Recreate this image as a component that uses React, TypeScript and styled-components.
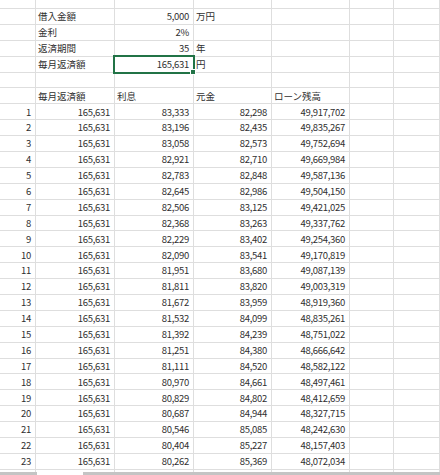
import React from "react";
import styled, { createGlobalStyle } from "styled-components";

const GlobalStyle = createGlobalStyle`
  html, body { margin: 0; padding: 0; background: #ffffff; }
  body { font-family: "Noto Sans CJK JP", "Noto Sans", sans-serif; }
`;

const Page = styled.div`
  width: 440px;
  height: 475px;
  overflow: hidden;
  display: flex;
  flex-direction: column;
  background: #ffffff;
`;

const Sheet = styled.div`
  flex: 1;
  min-height: 0;
  overflow: hidden;
  display: grid;
  grid-template-columns: 36px 79px 79px 78px 78px 44px 46px 1fr;
  grid-template-rows: 9px;
  grid-auto-rows: 15.9px;
  align-content: start;
`;

type Align = "left" | "right";

const Cell = styled.div<{ $align?: Align; $num?: boolean; $selected?: boolean }>`
  box-sizing: border-box;
  border-right: 1px solid #dedede;
  border-bottom: 1px solid #dedede;
  display: flex;
  align-items: center;
  justify-content: ${(p) => (p.$align === "right" ? "flex-end" : "flex-start")};
  padding: ${(p) => (p.$align === "right" ? "1px 4px 0 0" : "1px 0 0 2px")};
  font-size: 9.5px;
  line-height: 1;
  color: #303030;
  white-space: nowrap;
  letter-spacing: ${(p) => (p.$num ? "-0.3px" : "0")};
  position: ${(p) => (p.$selected ? "relative" : "static")};
  &::after {
    content: ${(p) => (p.$selected ? "''" : "none")};
    position: absolute;
    top: -2px;
    left: -2px;
    right: -2px;
    bottom: -2px;
    border: 2px solid #217346;
    pointer-events: none;
  }
`;

const Handle = styled.span`
  position: absolute;
  right: -3px;
  bottom: -3px;
  width: 4px;
  height: 4px;
  background: #217346;
  border: 1px solid #ffffff;
  z-index: 2;
`;

const Footer = styled.div`
  flex: 0 0 3px;
  display: flex;
`;

const FooterSegment = styled.div<{ $width?: number; $gap?: boolean }>`
  flex: ${(p) => (p.$width ? `0 0 ${p.$width}px` : "1")};
  background: ${(p) => (p.$gap ? "#ffffff" : "#c4c4c4")};
`;

type CellSpec = { text?: string; align?: Align; num?: boolean; selected?: boolean };

const L = (text: string): CellSpec => ({ text, align: "left" });
const R = (text: string): CellSpec => ({ text, align: "right", num: true });
const E: CellSpec = {};

const data: [number, string, string, string][] = [
  [1, "83,333", "82,298", "49,917,702"],
  [2, "83,196", "82,435", "49,835,267"],
  [3, "83,058", "82,573", "49,752,694"],
  [4, "82,921", "82,710", "49,669,984"],
  [5, "82,783", "82,848", "49,587,136"],
  [6, "82,645", "82,986", "49,504,150"],
  [7, "82,506", "83,125", "49,421,025"],
  [8, "82,368", "83,263", "49,337,762"],
  [9, "82,229", "83,402", "49,254,360"],
  [10, "82,090", "83,541", "49,170,819"],
  [11, "81,951", "83,680", "49,087,139"],
  [12, "81,811", "83,820", "49,003,319"],
  [13, "81,672", "83,959", "48,919,360"],
  [14, "81,532", "84,099", "48,835,261"],
  [15, "81,392", "84,239", "48,751,022"],
  [16, "81,251", "84,380", "48,666,642"],
  [17, "81,111", "84,520", "48,582,122"],
  [18, "80,970", "84,661", "48,497,461"],
  [19, "80,829", "84,802", "48,412,659"],
  [20, "80,687", "84,944", "48,327,715"],
  [21, "80,546", "85,085", "48,242,630"],
  [22, "80,404", "85,227", "48,157,403"],
  [23, "80,262", "85,369", "48,072,034"],
];

const rows: CellSpec[][] = [
  [E, E, E, E, E, E, E, E],
  [E, L("借入金額"), R("5,000"), L("万円"), E, E, E, E],
  [E, L("金利"), R("2%"), E, E, E, E, E],
  [E, L("返済期間"), R("35"), L("年"), E, E, E, E],
  [E, L("毎月返済額"), { ...R("165,631"), selected: true }, L("円"), E, E, E, E],
  [E, E, E, E, E, E, E, E],
  [E, L("毎月返済額"), L("利息"), L("元金"), L("ローン残高"), E, E, E],
  ...data.map(([n, i, p, b]) => [
    R(String(n)),
    R("165,631"),
    R(i),
    R(p),
    R(b),
    E,
    E,
    E,
  ]),
  [E, E, E, E, E, E, E, E],
];

export default function App() {
  return (
    <Page>
      <GlobalStyle />
      <Sheet>
        {rows.map((row, r) => (
          <React.Fragment key={r}>
            {row.map((c, ci) => (
              <Cell key={ci} $align={c.align} $num={c.num} $selected={c.selected}>
                {c.text}
                {c.selected && <Handle />}
              </Cell>
            ))}
          </React.Fragment>
        ))}
      </Sheet>
      <Footer>
        <FooterSegment $width={37} />
        <FooterSegment $width={46} $gap />
        <FooterSegment />
      </Footer>
    </Page>
  );
}
